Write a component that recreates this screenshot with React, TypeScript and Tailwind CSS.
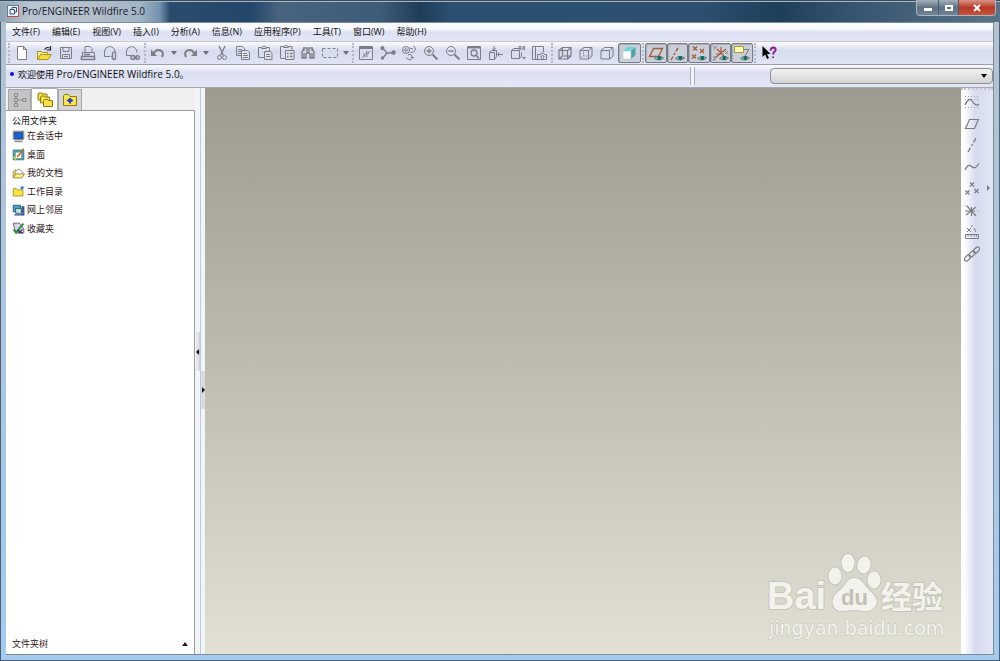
import type { ReactNode } from 'react'
import clsx from 'clsx'

function Icon({ children, className = 'text-[#7b7e84]' }: { children: ReactNode; className?: string }) {
  return (
    <svg
      viewBox="0 0 16 16"
      className={clsx('h-4 w-4 shrink-0', className)}
      fill="none"
      stroke="currentColor"
      strokeWidth="1"
      aria-hidden="true"
    >
      {children}
    </svg>
  )
}

const eye = (
  <g>
    <path d="M6.500 13.500q4.500-4 9-.500-4 3.500-9 .500z" fill="#b9c8c6" stroke="#5d7471" />
    <circle cx="11.300" cy="13" r="2" fill="#0b6e63" stroke="none" />
  </g>
)

const folder = (x: number, y: number) => (
  <path d={`M${x} ${y + 7}v-6l1-1h3l1 1h4v6z`} fill="#f5e04a" stroke="#8a7a14" />
)

const cross = (x: number, y: number) => <path d={`M${x - 2} ${y - 2}l4 4m0-4l-4 4`} />

const icons: Record<string, ReactNode> = {
  new: <path d="M3.500 1.500h6l3 3v10h-9zM9.500 1.500v3h3" fill="#fff" />,
  open: (
    <g>
      <path d="M1.500 14V6.500h4l1 1h5V10" fill="#fbf09a" stroke="#a8951d" />
      <path d="M1.500 14.500l3-5h11l-3.500 5z" fill="#f3dc3c" stroke="#a8951d" />
      <path d="M8.500 4.500q2-3 5-1.500m1-2v4h-4" stroke="#222" strokeWidth="1.200" />
    </g>
  ),
  save: <path d="M2.500 2.500h11v11h-11zM5 2.500v4h6v-4M4.500 13.500v-4h7v4M6 11.500h4" />,
  print: (
    <g>
      <path d="M5 7V1.500h5l2 2V7M2.500 7.500h12v4h-12z" />
      <path d="M1.500 11.500h13v3h-13zM4 9.500h6" strokeWidth="1.500" />
    </g>
  ),
  mail: (
    <g>
      <path d="M8 11.500H2.500V6q.500-4 5-4.500 5 .500 5.500 5" />
      <path d="M10.500 8v5.500q1.500 2 3 0V7.500q-1.500-1.500-3 .500M9 11.500h1" strokeWidth="1.300" />
    </g>
  ),
  link: (
    <g>
      <path d="M7 10.500H2.500V6q.500-4 5-4.500 5 .500 5.500 6" />
      <circle cx="9" cy="12.500" r="2" strokeWidth="1.400" />
      <circle cx="13.500" cy="12.500" r="1.800" strokeWidth="1.400" />
      <path d="M9 12.500h4" />
    </g>
  ),
  undo: (
    <g>
      <path d="M3.500 8.500Q6 4 10 5.200q4.500 1.800 2 6.800" strokeWidth="2" />
      <path d="M1 4.500V11h6z" fill="currentColor" stroke="none" />
    </g>
  ),
  redo: (
    <g>
      <path d="M12.500 8.500Q10 4 6 5.200q-4.500 1.800-2 6.800" strokeWidth="2" />
      <path d="M15 4.500V11H9z" fill="currentColor" stroke="none" />
    </g>
  ),
  cut: (
    <g>
      <path d="M5 1l4.500 9.500M11 1L6.500 10.500" strokeWidth="1.300" />
      <circle cx="5.500" cy="12.500" r="2" />
      <circle cx="10.500" cy="12.500" r="2" />
    </g>
  ),
  copy: (
    <g>
      <path d="M1.500 1.500h6l2 2v7h-8zM3 4.500h4M3 6.500h4M3 8.500h3" />
      <path d="M6.500 5.500h6l2 2v7h-8z" fill="#dfe2ee" />
      <path d="M8 8.500h4M8 10.500h5M8 12.500h5" />
    </g>
  ),
  paste: (
    <g>
      <path d="M7 12.500H1.500v-10h3M9 2.500h3.500V6M4.500 3.500v-1q2.500-3 5 0v1z" />
      <path d="M7.500 6.500h6l1.500 2v6H7.500z" fill="#dfe2ee" />
      <path d="M9 9.500h4M9 11.500h4.500" />
    </g>
  ),
  pasteSpecial: (
    <g>
      <path d="M6 13.500H1.500v-12h3M9 1.500h4V5M4.500 2.500v-1q2.500-2 5 0v1z" />
      <path d="M6.500 5.500h8.500v9H6.500z" fill="#dfe2ee" />
      <path d="M8 8.500h1.500m1.500 0h2.500M8 11.500h1.500m1.500 0h2.500" strokeWidth="1.500" />
    </g>
  ),
  find: (
    <g strokeWidth="1.400">
      <path d="M4 3L2 7v6h4V8M5 3h2v5h2V3h2M12 3l2 4v6h-4V8M4 2v4M12 2v4M4 8v5M12 8v5" />
    </g>
  ),
  select: <path d="M.5 3.500h15v9H.5z" strokeDasharray="3 2" />,
  refit: (
    <g>
      <path d="M1.500 1.500h13v13h-13z" />
      <path d="M2 3h12" strokeWidth="2" />
      <path d="M4 13l3-3m-1-2v3h4M8 10l4-4M9 6l-1 3 3-1" />
    </g>
  ),
  datum: (
    <g strokeWidth="1.300">
      <path d="M3 3.500L7 8l-4 5M7 8h5" />
      <circle cx="2.500" cy="3" r="1.300" fill="currentColor" />
      <circle cx="2.500" cy="13" r="1" fill="currentColor" />
      <circle cx="13.500" cy="7.500" r="1.600" fill="currentColor" />
    </g>
  ),
  orient: (
    <g>
      <circle cx="5" cy="5" r="3.500" />
      <circle cx="5" cy="5" r="1.300" />
      <path d="M9 3l3 1m0-3q3 1 2.500 4-2 3-5 2.500M7 10q3-2 4 1t-2 4l-4-2m5-1l3 1" />
    </g>
  ),
  zoomIn: (
    <g>
      <circle cx="6" cy="6" r="4.500" />
      <path d="M3.500 6h5M6 3.500v5" strokeWidth="1.400" />
      <path d="M9.500 9.500l5 5" strokeWidth="2" />
    </g>
  ),
  zoomOut: (
    <g>
      <circle cx="6" cy="6" r="4.500" />
      <path d="M3.500 6h5" strokeWidth="1.400" />
      <path d="M9.500 9.500l5 5" strokeWidth="2" />
    </g>
  ),
  zoomFit: (
    <g>
      <path d="M1.500 1.500h13v13h-13z" />
      <path d="M2 2.500h12" strokeWidth="2" />
      <circle cx="8" cy="8" r="3" strokeWidth="1.300" />
      <path d="M10 10l3 3.500" strokeWidth="1.600" />
    </g>
  ),
  views: (
    <g>
      <path d="M1.500 7.500h5v7h-5zM1.500 7.500l2-2h5v6l-2 3M6 1v4M4.500 3.500L6 5l1.500-1.500M15 9.500H9.500m2-2l-2 2 2 2" />
    </g>
  ),
  savedViews: (
    <g>
      <path d="M1.500 5.500h8v8h-8zM1.500 5.500l2-2h6M9.500 13.500l2-2v-4M9 5V1.500h2V5M9 3.500h2M13 1.500h1.500v3H13z" />
      <path d="M12 12h4l-2 2.500z" fill="currentColor" stroke="none" />
    </g>
  ),
  camera: (
    <g>
      <path d="M7 14.500H1.500v-13h11V7M4.500 2v12" />
      <path d="M6.500 9.500h3l1-1.500h2l1 1.500h2v5h-9z" />
      <circle cx="11.500" cy="12" r="1.500" />
    </g>
  ),
  wireframe: <path d="M2 5.500h8.500V14H2zM5.500 2.500H14V11H5.500zM2 5.500l3.500-3M10.500 5.500l3.500-3M10.500 14l3.500-3M2 14l3.500-3" strokeWidth="1.200" />,
  hidden: (
    <g>
      <path d="M2 5.500h8.500V14H2zM2 5.500l3.500-3H14V11l-3.500 3M10.500 5.500l3.500-3" />
      <path d="M5.500 2.500V11H14M2 14l3.500-3" stroke="#a9acb3" />
    </g>
  ),
  noHidden: <path d="M2 5.500h8.500V14H2zM2 5.500l3.500-3H14V11l-3.500 3M10.500 5.500l3.500-3" />,
  shaded: (
    <g stroke="none">
      <path d="M2 6h8v8H2z" fill="#fff" />
      <path d="M2 6l4-4h8.500L10 6z" fill="#68d8dc" />
      <path d="M10 6l4.500-4v8L10 14z" fill="#4aa5a9" />
      <path d="M2 6h8v8H2z" stroke="#9cbcc0" strokeWidth=".5" />
    </g>
  ),
  planeView: (
    <g>
      <path d="M1.500 11.500l4-8h9l-4 8z" stroke="#a25c36" strokeWidth="1.300" />
      {eye}
    </g>
  ),
  axisView: (
    <g>
      <path d="M2 15L10 1" stroke="#a25c36" strokeWidth="1.400" strokeDasharray="4 2 2 2" />
      {eye}
    </g>
  ),
  pointView: (
    <g>
      <g stroke="#a25c36" strokeWidth="1.300">{cross(4, 3.5)}{cross(11, 6)}{cross(3, 11.5)}</g>
      {eye}
    </g>
  ),
  csysView: (
    <g>
      <path d="M2 13L13 4M4 4l7 7M8 2v7H3" stroke="#a25c36" strokeWidth="1.200" />
      <path d="M0 1l2 2M4 1L1 5M12 6l3 3M15 6l-3 3M0 12h3l-3 3h3" stroke="#85888e" />
      {eye}
    </g>
  ),
  noteView: (
    <g>
      <path d="M.5 1.500h9v6h-9z" fill="#ffffb4" stroke="#a2a12a" />
      <path d="M10 4.500h5L11 11" />
      {eye}
    </g>
  ),
  help: (
    <g>
      <path d="M1.500 1v11l2.700-2.500L6 14l2-1-2-4h3.500z" fill="#000" stroke="none" />
      <path d="M9.500 5.500q.500-3 3-3 2.800.500 2 3-2 1.500-2.500 4M12 11.500v1.500" stroke="#871b8c" strokeWidth="1.900" />
    </g>
  ),
  curveThrough: (
    <g>
      <path d="M1 2.500h14M1 5.500h14M1 13.500h14" strokeDasharray="1 2" stroke="#a0a3aa" />
      <path d="M1 11q4-9 7.500-3.500T15 10" strokeWidth="1.300" />
    </g>
  ),
  plane: <path d="M1.500 12.500l4-9h9l-4 9z" strokeWidth="1.200" />,
  axis: <path d="M4 15L12 1" strokeWidth="1.300" strokeDasharray="5 2 2 2" />,
  curve: <path d="M1 11q3-7 6.500-3.500T15 4.500" strokeWidth="1.300" />,
  points: <g strokeWidth="1.300">{cross(8, 3.5)}{cross(3.5, 11.5)}{cross(12.5, 10)}</g>,
  csys: (
    <g>
      <path d="M3 3l9 10M2 12L12 4M7.500 4v9M1 8h10" strokeWidth="1.200" />
      <path d="M1 2l2 2M13 7l2 2" stroke="#a9acb3" />
    </g>
  ),
  analysis: (
    <g>
      {cross(5, 6)}
      <path d="M8 1v2m2 1l2 4M1.500 10.500h13v4h-13zM4 10.500v2M7 10.500v2M10 10.500v2M12.500 10.500v2" />
    </g>
  ),
  chain: (
    <g strokeWidth="1.200">
      <rect x="0" y="10" width="7" height="4" rx="2" transform="rotate(-45 3.500 12)" />
      <rect x="4.500" y="6" width="7" height="4" rx="2" transform="rotate(-45 8 8)" />
      <rect x="9" y="2" width="7" height="4" rx="2" transform="rotate(-45 12.500 4)" />
    </g>
  ),
  tree: (
    <path d="M2.500 1.500h3v3h-3zM2.500 6.500h3v3h-3zM2.500 11.500h3v3h-3zM11 6.500h3v3h-3zM4 4.500v2M4 9.500v2M5.500 8H11" />
  ),
  folders: <g>{folder(1, 1)}{folder(3.5, 4)}{folder(6.5, 7.5)}</g>,
  favorites: (
    <g>
      <path d="M1.500 13.500v-10l1-1h4l1.500 2h6.500v9z" fill="#f9e547" stroke="#8e7c1a" />
      <path d="M8 6l1 1.500 2 1-2 1L8 11.500 7 9.500l-2-1 2-1z" fill="#233bd0" stroke="#233bd0" />
    </g>
  ),
  session: (
    <g>
      <path d="M1.500 1.500h13v10h-13z" fill="#e6e3d4" stroke="#60656c" />
      <path d="M3 3h10v7.500H3z" fill="#1565d8" stroke="#153a7c" />
      <path d="M3 14h10" stroke="#8b8d91" strokeWidth="2" />
    </g>
  ),
  desktop: (
    <g>
      <path d="M1.500 2.500h13v12h-13z" fill="#3fa9c4" stroke="#266b86" />
      <path d="M4 5h8v8H4z" fill="#fdfbe6" stroke="#7a8a7a" />
      <path d="M14.500 1L8 9.500l-2 1" stroke="#c2681f" strokeWidth="1.800" />
      <path d="M2 11l3 3" stroke="#e4da3e" strokeWidth="2" />
    </g>
  ),
  documents: (
    <g>
      <path d="M1.500 13.500V5.500l3-2 2 2" fill="#f4e26a" stroke="#8c7b26" />
      <path d="M4.500 10V5l4-2.500 5 4V11z" fill="#fff" stroke="#7e8088" />
      <path d="M1.500 13.500l3-5h11l-3.500 5z" fill="#fbf08c" stroke="#8c7b26" />
    </g>
  ),
  working: (
    <g>
      <path d="M1.500 13.500v-9h4l1 1.500h7v7.500z" fill="#f9e547" stroke="#95831d" />
      <path d="M12.500 1v5M10 3.500h5M11 2l3 3M14 2l-3 3" stroke="#2563c9" />
    </g>
  ),
  network: (
    <g>
      <path d="M1.500 1.500h9v8h-9z" fill="#45a3c0" stroke="#1e5268" />
      <path d="M4.500 5.500h7v6h-7z" fill="#bfe5dc" stroke="#1e5268" />
      <path d="M3 13.500h10M12.500 3.500h2v10h-2zM13 6h2M13 9h2" stroke="#2b4a8d" strokeWidth="1.500" />
    </g>
  ),
  starred: (
    <g>
      <path d="M1.500 1.500h8l5 7v5h-10z" fill="#d9d2ee" stroke="#5a5380" />
      <path d="M2 9l3 4 9-11" stroke="#24962d" strokeWidth="2.500" />
      <path d="M7 10l6 4M13 9l-5 5" stroke="#3c2b6b" strokeWidth="1.500" />
    </g>
  ),
}

const menus = ['文件(F)', '编辑(E)', '视图(V)', '插入(I)', '分析(A)', '信息(N)', '应用程序(P)', '工具(T)', '窗口(W)', '帮助(H)']

const folderItems = [
  { icon: 'session', label: '在会话中' },
  { icon: 'desktop', label: '桌面' },
  { icon: 'documents', label: '我的文档' },
  { icon: 'working', label: '工作目录' },
  { icon: 'network', label: '网上邻居' },
  { icon: 'starred', label: '收藏夹' },
]

const sideTools = ['curveThrough', 'plane', 'axis', 'curve', 'points', 'csys', 'analysis', 'chain']

function Tool({ name, pressed = false }: { name: string; pressed?: boolean }) {
  return (
    <button
      type="button"
      aria-label={name}
      className={clsx(
        'flex h-5 min-w-0 flex-1 items-center justify-center',
        pressed && 'rounded-xs border border-[#777b86] bg-[#cbcfdb] shadow-[inset_1px_1px_1px_#a9adb9]',
      )}
    >
      <Icon>{icons[name]}</Icon>
    </button>
  )
}

function Grip() {
  return <div className="mx-px h-5 w-0 border-l-2 border-dotted border-[#b4b8c6]" />
}

function Drop({ label }: { label: string }) {
  return (
    <button type="button" aria-label={label} className="flex h-5 w-[10px] items-center justify-center">
      <svg viewBox="0 0 6 4" className="h-1 w-1.5" aria-hidden="true">
        <path d="M0 0h6L3 4z" fill="#6e7178" />
      </svg>
    </button>
  )
}

function TitleBar() {
  return (
    <header className="flex h-[22px] shrink-0 items-center justify-between bg-[linear-gradient(90deg,#8fa3b5_0,#b9c5d0_3%,#b4bfcb_9%,#a3b4c4_14%,#7391ad_16%,#2a4c6c_17%,#24466a_25%,#48647f_28%,#3d5c79_38%,#1f3d59_42%,#2b4f70_45%,#2d5070_70%,#1e3f5b_78%,#35546f_85%,#5b7388_100%)] pr-1 pl-[7px] shadow-[inset_0_1px_0_#3c4a57,inset_0_2px_0_#a3b8ca]">
      <div className="flex items-center gap-[3px]">
        <svg viewBox="0 0 12 12" className="h-3 w-3" aria-hidden="true">
          <rect x=".5" y=".5" width="11" height="11" fill="#eef3fa" stroke="#64799a" />
          <path d="M11.500 1v10.500H1" stroke="#c9473b" fill="none" />
          <path d="M3 4.500h4.500V9H3zM5 4.500v-2h4.500V7h-2" fill="none" stroke="#35557f" />
        </svg>
        <h1 className="text-[10px] leading-4 text-[#14202c]">Pro/ENGINEER Wildfire 5.0</h1>
      </div>
      <div className="flex h-4 self-start overflow-hidden rounded-b border border-t-0 border-[#a9b5c0]">
        <button type="button" aria-label="最小化" className="flex w-[22px] items-center justify-center border-r border-[#4b5c6c] bg-linear-to-b from-[#a4b0bb] via-[#5f7284] to-[#718597]">
          <span className="mt-1 h-[3px] w-2 bg-white" />
        </button>
        <button type="button" aria-label="最大化" className="flex w-5 items-center justify-center border-r border-[#4b5c6c] bg-linear-to-b from-[#a4b0bb] via-[#5f7284] to-[#718597]">
          <span className="h-1.5 w-2 border-2 border-white" />
        </button>
        <button type="button" aria-label="关闭" className="flex w-[36px] items-center justify-center bg-linear-to-b from-[#d99083] via-[#b53926] to-[#c9523b]">
          <svg viewBox="0 0 8 8" className="h-2 w-2" aria-hidden="true">
            <path d="M1 1l6 6M7 1L1 7" stroke="#fff" strokeWidth="2" />
          </svg>
        </button>
      </div>
    </header>
  )
}

function MenuBar() {
  return (
    <nav className="flex h-[19px] shrink-0 items-center gap-3 border-b border-[#c3c7d6] bg-linear-to-b from-[#fafbfe] from-30% via-[#dde1f1] via-50% to-[#e2e6f5] px-1.5">
      {menus.map((menu) => (
        <button key={menu} type="button" className="text-[9px] leading-4 whitespace-nowrap text-[#111]">
          {menu}
        </button>
      ))}
    </nav>
  )
}

function ToolBar() {
  return (
    <div className="flex h-[23px] shrink-0 items-center border-b border-[#9b9fa9] bg-linear-to-b from-[#fbfcff] via-[#d6dbee] via-40% to-[#e0e4f3] pl-px">
      <Grip />
      <div className="flex w-[132px]">
        {['new', 'open', 'save', 'print', 'mail', 'link'].map((name) => <Tool key={name} name={name} />)}
      </div>
      <Grip />
      <div className="flex w-8"><Tool name="undo" /><Drop label="撤消列表" /></div>
      <div className="flex w-8"><Tool name="redo" /><Drop label="重做列表" /></div>
      <div className="flex w-[108px]">
        {['cut', 'copy', 'paste', 'pasteSpecial', 'find'].map((name) => <Tool key={name} name={name} />)}
      </div>
      <div className="flex w-8"><Tool name="select" /><Drop label="选取方式" /></div>
      <Grip />
      <div className="flex w-[195px]">
        {['refit', 'datum', 'orient', 'zoomIn', 'zoomOut', 'zoomFit', 'views', 'savedViews', 'camera'].map((name) => (
          <Tool key={name} name={name} />
        ))}
      </div>
      <Grip />
      <div className="flex w-[87px]">
        {['wireframe', 'hidden', 'noHidden'].map((name) => <Tool key={name} name={name} />)}
        <Tool name="shaded" pressed />
      </div>
      <Grip />
      <div className="flex w-[108px]">
        {['planeView', 'axisView', 'pointView', 'csysView', 'noteView'].map((name) => (
          <Tool key={name} name={name} pressed />
        ))}
      </div>
      <Grip />
      <div className="flex w-6"><Tool name="help" /></div>
    </div>
  )
}

function StatusBar() {
  return (
    <div className="flex h-[23px] shrink-0 items-center border-b border-[#a6a8ab] bg-linear-to-b from-[#f8f9fd] via-[#dbdff1] via-35% to-[#e4e8f6]">
      <p className="flex flex-1 items-center gap-1 pb-1 pl-1 text-[10px] leading-4 text-[#111]">
        <span className="h-1 w-1 rounded-full bg-[#1212e6]" />
        <span><span className="text-[9px]">欢迎使用</span> Pro/ENGINEER Wildfire 5.0。</span>
      </p>
      <div className="h-[18px] w-[5px] border-x border-[#a9adbb] bg-[#f4f5fa]" />
      <div className="flex w-[298px] justify-end">
        <div className="relative w-[223px]">
          <select aria-label="过滤器" className="block h-4 w-full appearance-none rounded-sm border border-[#8d8f94] bg-linear-to-b from-[#f2f2f2] to-[#d4d4d4] text-[9px]" />
          <svg viewBox="0 0 6 4" className="pointer-events-none absolute top-1.5 right-1.5 h-1 w-1.5" aria-hidden="true">
            <path d="M0 0h6L3 4z" fill="#111" />
          </svg>
        </div>
      </div>
    </div>
  )
}

function Navigator() {
  return (
    <aside className="flex w-[189px] shrink-0 flex-col bg-[#f0f0f0]">
      <div className="flex h-[22px] items-end pl-0.5">
        <button type="button" aria-label="模型树" className="flex h-[21px] w-[23px] items-center justify-center border border-b-0 border-[#a4a6aa] bg-[#c3c4c6]">
          <Icon className="text-[#898b8f]">{icons.tree}</Icon>
        </button>
        <button type="button" aria-label="文件夹浏览器" className="flex h-[22px] w-[27px] items-center justify-center border border-b-0 border-[#b0b2b6] bg-white">
          <Icon>{icons.folders}</Icon>
        </button>
        <button type="button" aria-label="收藏夹" className="flex h-[21px] w-6 items-center justify-center border border-b-0 border-[#a4a6aa] bg-[#d6d6d8]">
          <Icon>{icons.favorites}</Icon>
        </button>
      </div>
      <div className="flex flex-1 flex-col border-t border-r border-[#9a9ca2] bg-white px-1.5 pt-1 pb-1 text-[9px] leading-3 text-[#301616]">
        <h2 className="text-[#111]">公用文件夹</h2>
        <ul className="flex h-[111px] flex-col">
          {folderItems.map((item) => (
            <li key={item.icon} className="flex flex-1 items-center">
              <button type="button" className="flex items-center gap-0.5">
                <svg viewBox="0 0 16 16" fill="none" className="h-[13px] w-[13px]" aria-hidden="true">
                  {icons[item.icon]}
                </svg>
                {item.label}
              </button>
            </li>
          ))}
        </ul>
        <button type="button" className="mt-auto flex items-center justify-between">
          文件夹树
          <svg viewBox="0 0 6 4" className="h-1 w-1.5" aria-hidden="true">
            <path d="M0 4h6L3 0z" fill="#301616" />
          </svg>
        </button>
      </div>
    </aside>
  )
}

function Splitter() {
  return (
    <div className="flex w-[10px] shrink-0 bg-[#f3f4f7]">
      <div className="flex w-[6px] flex-col border-r border-[#b9cbe0] pl-px">
        <button type="button" aria-label="收起" className="mt-[244px] flex h-[39px] items-center justify-end border-r border-[#cfcfd3] bg-[#e6e6e9]">
          <svg viewBox="0 0 3 6" className="h-1.5 w-[3px] shrink-0"><path d="M3 0v6L0 3z" fill="#111" /></svg>
        </button>
      </div>
      <div className="flex w-1 flex-col">
        <button type="button" aria-label="展开" className="mt-[283px] flex h-[38px] items-center justify-end bg-[#dcdce0]">
          <svg viewBox="0 0 3 6" className="h-1.5 w-[3px] shrink-0"><path d="M0 0v6l3-3z" fill="#111" /></svg>
        </button>
      </div>
    </div>
  )
}

function Watermark() {
  return (
    <svg
      viewBox="0 0 180 90"
      className="absolute right-3.5 bottom-3 h-[90px] w-[180px] font-['Liberation_Sans','Noto_Sans_CJK_SC',sans-serif]"
      fill="#f3f2ed"
      stroke="#c7c5b9"
      strokeWidth="2"
      paintOrder="stroke"
    >
      <text x="0" y="57" className="text-[38px] font-bold">Bai</text>
      <ellipse cx="68" cy="24" rx="6.500" ry="8.500" />
      <ellipse cx="81" cy="11" rx="6.500" ry="9" />
      <ellipse cx="97" cy="13" rx="6.500" ry="8.500" transform="rotate(10 97 13)" />
      <ellipse cx="107" cy="28" rx="6.500" ry="8.500" />
      <path d="M87 26c8 0 10 7 15 12 7 6 10 11 6 17-5 7-14 3-21 3s-16 4-20-3c-4-8 1-13 6-17 6-5 7-12 14-12z" />
      <text x="74" y="53" className="text-[22px] font-bold" fill="#c2c0b5" stroke="none">du</text>
      <text x="114" y="56" className="text-[31px] font-bold">经验</text>
      <text x="2" y="83" className="font-['DejaVu_Sans',sans-serif] text-[19px]" strokeWidth="1">jingyan.baidu.com</text>
    </svg>
  )
}

function SideBar() {
  return (
    <div className="flex w-8 shrink-0 flex-col border-t-2 border-dotted border-[#c3c6d4] bg-linear-to-r from-white from-10% via-[#d6dbee] via-45% to-[#e1e5f5]">
      <div className="flex items-center pt-px">
        <div className="flex h-[174px] w-[22px] flex-col">
          {sideTools.map((name) => <Tool key={name} name={name} />)}
        </div>
        <button type="button" aria-label="点工具" className="mt-5 flex h-5 flex-1 items-center justify-center">
          <svg viewBox="0 0 3 6" className="h-1.5 w-[3px]"><path d="M0 0v6l3-3z" fill="#777a82" /></svg>
        </button>
      </div>
    </div>
  )
}

export default function App() {
  return (
    <div className="flex h-screen flex-col overflow-hidden bg-[#a9cbea] font-['Open_Sans','Noto_Sans_CJK_SC',sans-serif]">
      <TitleBar />
      <div className="flex min-h-0 flex-1 border-x border-b border-[#4b6076] bg-linear-to-b from-[#b3c2d1] to-[#a4cbf0] px-[5px] pb-[5px]">
        <div className="flex min-w-0 flex-1 flex-col border-y border-r border-[#7d8b99]">
          <MenuBar />
          <ToolBar />
          <StatusBar />
          <main className="flex min-h-0 flex-1">
            <Navigator />
            <Splitter />
            <section aria-label="图形窗口" className="relative flex-1 bg-linear-to-b from-[#9d9b8f] to-[#e2e0d5]">
              <Watermark />
            </section>
            <SideBar />
          </main>
        </div>
      </div>
    </div>
  )
}
